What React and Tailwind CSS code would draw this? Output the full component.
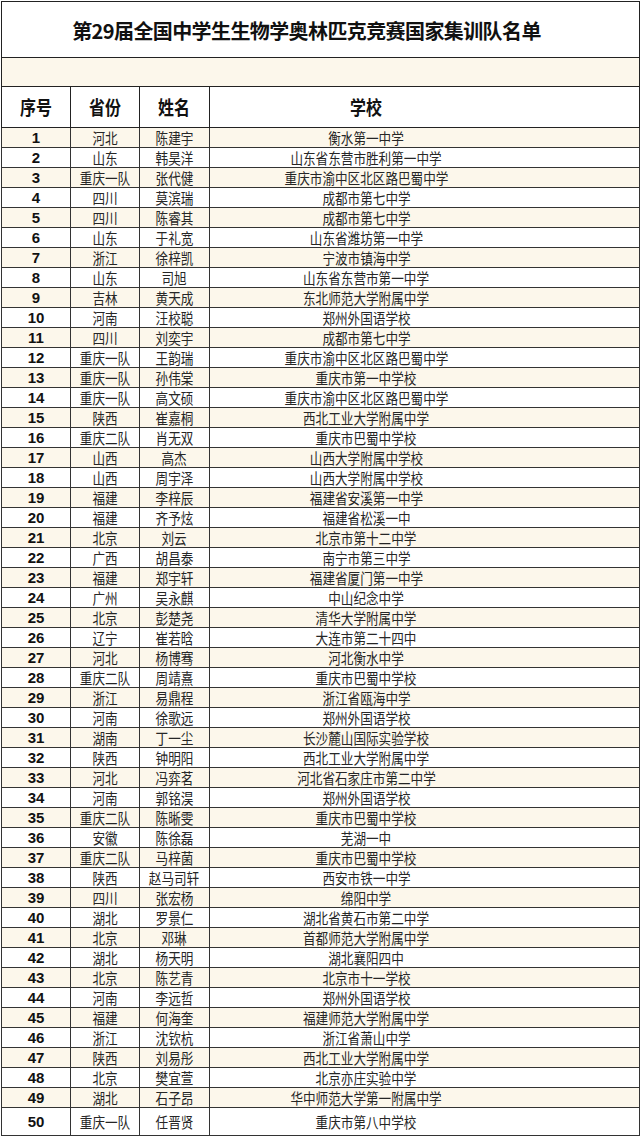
import React from 'react';

const rows = [
  ['河北', '陈建宇', '衡水第一中学'],
  ['山东', '韩昊洋', '山东省东营市胜利第一中学'],
  ['重庆一队', '张代健', '重庆市渝中区北区路巴蜀中学'],
  ['四川', '莫滨瑞', '成都市第七中学'],
  ['四川', '陈睿其', '成都市第七中学'],
  ['山东', '于礼宽', '山东省潍坊第一中学'],
  ['浙江', '徐梓凯', '宁波市镇海中学'],
  ['山东', '司旭', '山东省东营市第一中学'],
  ['吉林', '黄天成', '东北师范大学附属中学'],
  ['河南', '汪校聪', '郑州外国语学校'],
  ['四川', '刘奕宇', '成都市第七中学'],
  ['重庆一队', '王韵瑞', '重庆市渝中区北区路巴蜀中学'],
  ['重庆一队', '孙伟棠', '重庆市第一中学校'],
  ['重庆一队', '高文硕', '重庆市渝中区北区路巴蜀中学'],
  ['陕西', '崔嘉桐', '西北工业大学附属中学'],
  ['重庆二队', '肖无双', '重庆市巴蜀中学校'],
  ['山西', '高杰', '山西大学附属中学校'],
  ['山西', '周宇泽', '山西大学附属中学校'],
  ['福建', '李梓辰', '福建省安溪第一中学'],
  ['福建', '齐予炫', '福建省松溪一中'],
  ['北京', '刘云', '北京市第十二中学'],
  ['广西', '胡昌泰', '南宁市第三中学'],
  ['福建', '郑宇轩', '福建省厦门第一中学'],
  ['广州', '吴永麒', '中山纪念中学'],
  ['北京', '彭楚尧', '清华大学附属中学'],
  ['辽宁', '崔若晗', '大连市第二十四中'],
  ['河北', '杨博骞', '河北衡水中学'],
  ['重庆二队', '周靖熹', '重庆市巴蜀中学校'],
  ['浙江', '易鼎程', '浙江省瓯海中学'],
  ['河南', '徐歌远', '郑州外国语学校'],
  ['湖南', '丁一尘', '长沙麓山国际实验学校'],
  ['陕西', '钟明阳', '西北工业大学附属中学'],
  ['河北', '冯弈茗', '河北省石家庄市第二中学'],
  ['河南', '郭铭淏', '郑州外国语学校'],
  ['重庆二队', '陈晰雯', '重庆市巴蜀中学校'],
  ['安徽', '陈徐磊', '芜湖一中'],
  ['重庆二队', '马梓菌', '重庆市巴蜀中学校'],
  ['陕西', '赵马司轩', '西安市铁一中学'],
  ['四川', '张宏杨', '绵阳中学'],
  ['湖北', '罗景仁', '湖北省黄石市第二中学'],
  ['北京', '邓琳', '首都师范大学附属中学'],
  ['湖北', '杨天明', '湖北襄阳四中'],
  ['北京', '陈艺青', '北京市十一学校'],
  ['河南', '李远哲', '郑州外国语学校'],
  ['福建', '何海奎', '福建师范大学附属中学'],
  ['浙江', '沈钦杭', '浙江省萧山中学'],
  ['陕西', '刘易彤', '西北工业大学附属中学'],
  ['北京', '樊宜萱', '北京亦庄实验中学'],
  ['湖北', '石子昂', '华中师范大学第一附属中学'],
  ['重庆一队', '任晋贤', '重庆市第八中学校'],
];

const cjk = { fontFamily: '"Noto Sans CJK SC", "Noto Sans", sans-serif' };
const num = { fontFamily: '"Liberation Sans Narrow", "Liberation Sans", Arial, sans-serif' };

// condensed CJK text, the source looks like a narrow YaHei rendering
const Narrow = ({ children }) => (
  <span className="inline-block scale-x-[0.84] whitespace-nowrap">{children}</span>
);

export default function App() {
  return (
    <div className="w-[640px] h-[1136px] bg-white overflow-hidden">
      <table className="w-[639px] table-fixed border-collapse border border-[#222] mt-px ml-px" style={cjk}>
        <colgroup>
          <col className="w-[69px]" />
          <col className="w-[69px]" />
          <col className="w-[70px]" />
          <col />
        </colgroup>
        <tbody>
          <tr className="h-[56px]">
            <td colSpan={4} className="border border-[#222] text-center text-[20px] font-bold text-[#111] tracking-[-0.6px] pt-[2px] pr-[28px]">
              第29届全国中学生生物学奥林匹克竞赛国家集训队名单
            </td>
          </tr>
          <tr className="h-[29px] bg-[#fcf7eb]">
            <td colSpan={4} className="border border-[#222]" />
          </tr>
          <tr className="h-[41px] text-[19px] font-bold text-[#111]">
            <td className="border border-[#222] text-center"><Narrow>序号</Narrow></td>
            <td className="border border-[#222] text-center"><Narrow>省份</Narrow></td>
            <td className="border border-[#222] text-center"><Narrow>姓名</Narrow></td>
            <td className="border border-[#222] text-center pr-[116px]"><Narrow>学校</Narrow></td>
          </tr>
          {rows.map((r, i) => (
            <tr
              key={i}
              className={`${i === rows.length - 1 ? 'h-[28px]' : 'h-[20px]'} ${i % 2 === 0 ? 'bg-[#fcf7eb]' : 'bg-white'} text-[15px] text-[#262626] leading-none`}
            >
              <td className="border border-[#333] text-center font-bold text-[15px] text-[#111]" style={num}>{i + 1}</td>
              <td className="border border-[#333] text-center"><Narrow>{r[0]}</Narrow></td>
              <td className="border border-[#333] text-center"><Narrow>{r[1]}</Narrow></td>
              <td className="border border-[#333] text-center pr-[116px]"><Narrow>{r[2]}</Narrow></td>
            </tr>
          ))}
        </tbody>
      </table>
    </div>
  );
}
